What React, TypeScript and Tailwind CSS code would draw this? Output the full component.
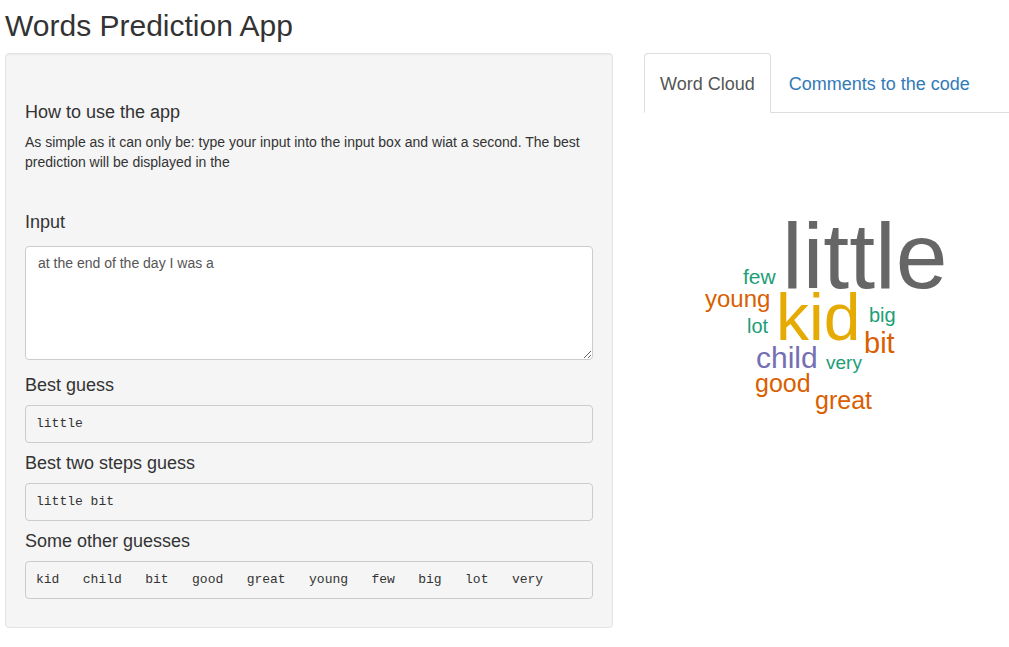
import React from 'react';

const cloudWords = [
  { text: 'little', x: 138, y: 175, size: 93, color: '#666666' },
  { text: 'kid', x: 132, y: 227, size: 66, color: '#E6AB02' },
  { text: 'few', x: 99, y: 171, size: 21, color: '#1B9E77' },
  { text: 'young', x: 61, y: 194, size: 24, color: '#D95F02' },
  { text: 'lot', x: 103, y: 220, size: 20, color: '#1B9E77' },
  { text: 'big', x: 225, y: 209, size: 20, color: '#1B9E77' },
  { text: 'bit', x: 220, y: 240, size: 29, color: '#D95F02' },
  { text: 'child', x: 112, y: 255, size: 30, color: '#7570B3' },
  { text: 'very', x: 182, y: 256, size: 19, color: '#1B9E77' },
  { text: 'good', x: 111, y: 279, size: 25, color: '#D95F02' },
  { text: 'great', x: 171, y: 296, size: 25, color: '#D95F02' },
];

const Output = ({ label, value }: { label: string; value: string }) => (
  <>
    <h4 className="mt-[10px] text-[18px] leading-[20px]">{label}</h4>
    <pre className="mt-[10px] h-[38px] rounded border border-[#ccc] bg-[#f5f5f5] px-[10px] py-[9px] font-['Liberation_Mono','Courier_New',monospace] text-[13px] leading-[18px] whitespace-pre text-[#333]">
      {value}
    </pre>
  </>
);

export default function App() {
  return (
    <div className="min-h-screen bg-white pl-[5px] font-['Liberation_Sans',Arial,sans-serif] text-[#333]">
      <h2 className="pt-[9px] pb-[11px] text-[30px] leading-[33px]">Words Prediction App</h2>

      <div className="flex gap-[31px]">
        {/* Sidebar */}
        <div className="w-[608px] rounded border border-[#e3e3e3] bg-[#f5f5f5] px-[19px] pt-[19px] pb-[28px] shadow-[inset_0_1px_1px_rgba(0,0,0,0.05)]">
          <h4 className="mt-[29px] text-[18px] leading-[20px]">How to use the app</h4>
          <p className="mt-[10px] text-[14px] leading-[20px]">
            As simple as it can only be: type your input into the input box and wiat a second. The best prediction will be displayed in the
          </p>

          <h4 className="mt-[40px] text-[18px] leading-[20px]">Input</h4>
          <textarea
            className="mt-[14px] mb-[15px] block h-[114px] w-full rounded border border-[#ccc] bg-white px-[12px] py-[6px] text-[14px] leading-[20px] text-[#555] outline-none"
            defaultValue="at the end of the day I was a"
          />

          <Output label="Best guess" value="little" />
          <Output label="Best two steps guess" value="little bit" />
          <Output label="Some other guesses" value="kid   child   bit   good   great   young   few   big   lot   very" />
        </div>

        {/* Main panel */}
        <div className="flex-1">
          <ul className="flex border-b border-[#ddd] text-[18px]">
            <li className="-mb-px flex h-[60px] items-center rounded-t border border-[#ddd] border-b-transparent bg-white px-[15px] pt-[3px] text-[#555]">
              Word Cloud
            </li>
            <li className="ml-[2px] flex h-[59px] items-center border border-transparent px-[15px] pt-[3px] text-[#337ab7]">
              Comments to the code
            </li>
          </ul>

          <svg width="365" height="320" className="block">
            {cloudWords.map((w) => (
              <text key={w.text} x={w.x} y={w.y} fontSize={w.size} fill={w.color} fontFamily="Liberation Sans, Arial, sans-serif">
                {w.text}
              </text>
            ))}
          </svg>
        </div>
      </div>
    </div>
  );
}
